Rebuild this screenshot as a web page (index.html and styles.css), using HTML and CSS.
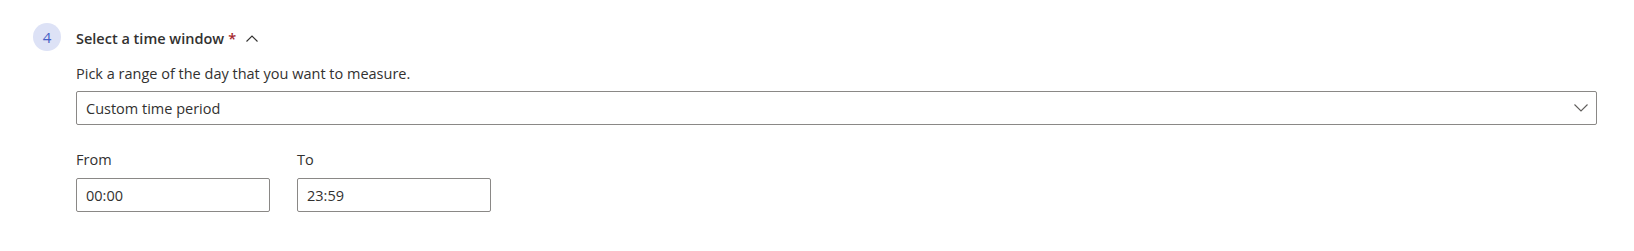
FILE: index.html
```html
<!DOCTYPE html>
<html lang="en">
<head>
    <meta charset="UTF-8">
    <title>Select a time window</title>
    <link rel="stylesheet" href="styles.css">
</head>
<body>
    <section class="step">
        <div class="step-number">4</div>
        <div class="step-body">
            <div class="step-header">
                <h3>Select a time window<span class="required">*</span></h3>
                <button class="collapse" aria-label="Collapse">
                    <svg width="12" height="7" viewBox="0 0 12 7"><path d="M0.5 6.5 L6 1 L11.5 6.5" fill="none" stroke="#323130" stroke-width="1.1"/></svg>
                </button>
            </div>
            <p class="hint">Pick a range of the day that you want to measure.</p>
            <div class="dropdown">
                <span>Custom time period</span>
                <svg width="14" height="8" viewBox="0 0 14 8"><path d="M0.5 0.5 L7 7 L13.5 0.5" fill="none" stroke="#605e5c" stroke-width="1.1"/></svg>
            </div>
            <div class="time-range">
                <div class="field">
                    <label for="from">From</label>
                    <input type="text" id="from" value="00:00">
                </div>
                <div class="field">
                    <label for="to">To</label>
                    <input type="text" id="to" value="23:59">
                </div>
            </div>
        </div>
    </section>
</body>
</html>
```

FILE: styles.css
```css
body {
    margin: 0;
    font-family: "Open Sans", "Noto Sans", sans-serif;
    font-size: 14.5px;
    color: #323130;
    background: #fff;
}
.step {
    display: flex;
    gap: 15px;
    padding: 23px 37px 0 33px;
}
.step-number {
    flex: none;
    width: 28px;
    height: 28px;
    border-radius: 50%;
    background-color: #dde2f6;
    color: #4760c6;
    font-size: 15px;
    line-height: 28px;
    text-align: center;
}
.step-body {
    flex: 1;
}
.step-header {
    display: flex;
    align-items: center;
    height: 28px;
}
.step-header h3 {
    margin: 0;
    font-size: 14.5px;
    font-weight: 600;
    line-height: 20px;
    padding-top: 4px;
}
.required {
    color: #a4262c;
    margin-left: 4px;
}
.collapse {
    border: none;
    background: none;
    padding: 0;
    margin-left: 10px;
    margin-top: 2px;
    display: flex;
}
.hint {
    margin: 13px 0 7px;
    line-height: 20px;
}
.dropdown {
    display: flex;
    justify-content: space-between;
    align-items: center;
    height: 32px;
    border: 1px solid #8a8886;
    border-radius: 2px;
    padding: 0 8px 0 9px;
}
.time-range {
    display: flex;
    gap: 27px;
    margin-top: 25px;
}
.field {
    display: flex;
    flex-direction: column;
}
label {
    line-height: 20px;
    margin-bottom: 8px;
}
input {
    width: 175px;
    height: 32px;
    box-sizing: content-box;
    padding: 0 8px 0 9px;
    margin: 0;
    border: 1px solid #8a8886;
    border-radius: 2px;
    font-family: inherit;
    font-size: 14.5px;
    color: #323130;
}
```
